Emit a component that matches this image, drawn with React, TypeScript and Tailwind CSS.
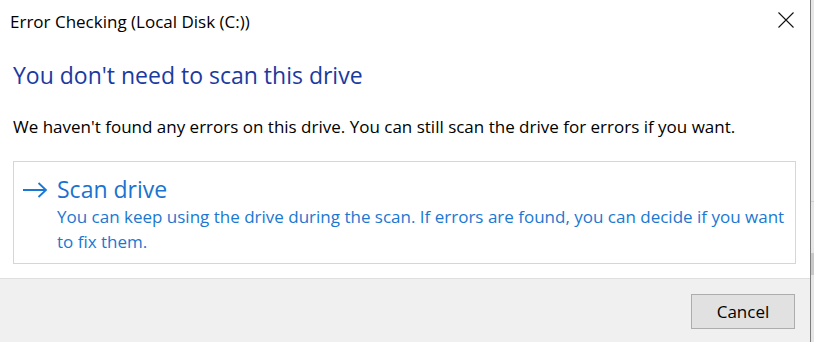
import React from "react";

export default function App() {
  return (
    <div className="w-[814px] h-[342px] flex bg-[#e4e4e4] font-['Open_Sans',sans-serif] overflow-hidden">
      <div className="w-[811px] h-full flex flex-col bg-white border-r border-[#7d7d7d]">
        {/* title bar */}
        <div className="h-[42px] flex items-start justify-between">
          <div className="pt-[10px] pl-[10px] text-[17px] leading-[24px] text-black">
            Error Checking (Local Disk (C:))
          </div>
          <div className="pt-[12px] pr-[16px]">
            <svg width="16" height="16" viewBox="0 0 16 16">
              <path d="M0.5 0.5 L15.5 15.5 M15.5 0.5 L0.5 15.5" stroke="#111" strokeWidth="1.1" fill="none" />
            </svg>
          </div>
        </div>

        {/* content */}
        <div className="flex-1 px-[13px] pr-[14px]">
          <div className="mt-[18px] text-[23px] leading-[30px] text-[#1b3a9f]">
            You don&apos;t need to scan this drive
          </div>
          <div className="mt-[25px] text-[17px] leading-[24px] text-black">
            We haven&apos;t found any errors on this drive. You can still scan the drive for errors if you want.
          </div>
          <div className="mt-[22px] h-[103px] border border-[#c3dbef] flex pt-[12px] pl-[9px]">
            <div className="w-[34px] pt-[8px]">
              <svg width="25" height="16" viewBox="0 0 25 16">
                <path d="M0 8 H23 M15.5 1 L23 8 L15.5 15" stroke="#1a78d2" strokeWidth="1.8" fill="none" />
              </svg>
            </div>
            <div className="flex flex-col">
              <div className="text-[23px] leading-[30px] text-[#1a73cf]">Scan drive</div>
              <div className="mt-[1px] text-[17px] leading-[24.5px] text-[#1a78d2]">
                You can keep using the drive during the scan. If errors are found, you can decide if you want
                <br />
                to fix them.
              </div>
            </div>
          </div>
        </div>

        {/* footer */}
        <div className="h-[64px] bg-[#f0f0f0] border-t border-[#dfdfdf] flex justify-end items-start pt-[15px] pr-[15px]">
          <button className="w-[104px] h-[35px] bg-[#e1e1e1] border border-[#adadad] text-[17px] leading-[24px] text-black">
            Cancel
          </button>
        </div>
      </div>
      <div className="flex-1 flex flex-col">
        <div className="h-[201px] bg-[#e6e6e6]" />
        <div className="h-[1px] bg-[#cfcfcf]" />
        <div className="h-[51px] bg-[#e6e6e6]" />
        <div className="h-[22px] bg-[#c9c9c9]" />
        <div className="flex-1 bg-[#e6e6e6]" />
      </div>
    </div>
  );
}
